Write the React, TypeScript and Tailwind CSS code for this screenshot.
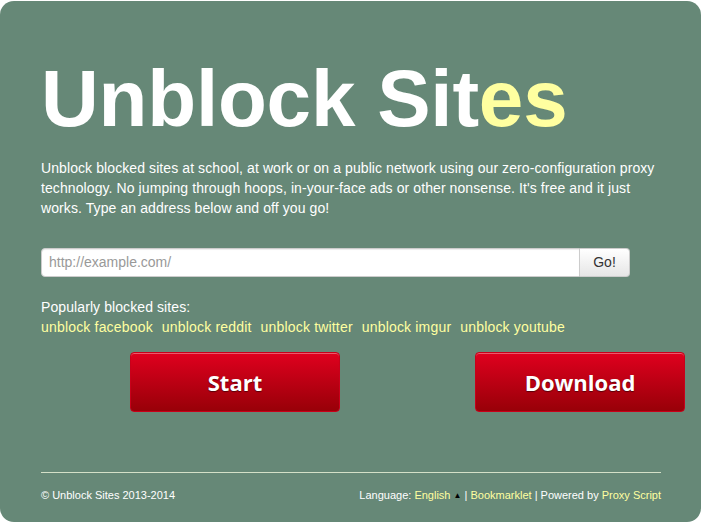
import React from "react";

export default function App() {
  const arial = { fontFamily: '"Liberation Sans", Arial, sans-serif' };
  const links = ["unblock facebook", "unblock reddit", "unblock twitter", "unblock imgur", "unblock youtube"];
  return (
    <div className="w-[703px] h-[525px] bg-white overflow-hidden" style={arial}>
      <div className="ml-0 mt-[1px] w-[701px] h-[521px] rounded-[14px] bg-[#668877] flex flex-col pl-[41px] text-white">
        <h1 className="mt-[58px] text-[80px] leading-[80px] font-bold tracking-[-0.2px] text-white">
          Unblock Sit<span className="text-[#ffffa0]">es</span>
        </h1>
        <p className="mt-[19px] w-[620px] text-[14px] leading-[20px] tracking-[0.09px] text-white">
          Unblock blocked sites at school, at work or on a public network using our zero-configuration proxy technology. No jumping through hoops, in-your-face ads or other nonsense. It's free and it just works. Type an address below and off you go!
        </p>
        <div className="mt-[30px] flex w-[589px] h-[29px]">
          <div className="flex-1 bg-white border border-[#cccccc] rounded-l-[4px] flex items-center px-[7px] text-[14px] text-[#999999] shadow-[inset_0_1px_1px_rgba(0,0,0,0.075)]">
            http://example.com/
          </div>
          <div className="w-[50px] border border-l-0 border-[#cccccc] rounded-r-[4px] bg-gradient-to-b from-white to-[#e6e6e6] flex items-center justify-center text-[14px] text-[#333333]">
            Go!
          </div>
        </div>
        <div className="mt-[20px] text-[14px] leading-[20px] tracking-[0.09px]">Popularly blocked sites:</div>
        <div className="flex gap-[9px] text-[14px] leading-[20px] tracking-[0.18px] text-[#ffffa0]">
          {links.map((l) => (
            <span key={l}>{l}</span>
          ))}
        </div>
        <div className="mt-[15px] flex gap-[135px] pl-[89px]">
          {["Start", "Download"].map((t) => (
            <div
              key={t}
              className="w-[210px] h-[60px] shrink-0 rounded-[4px] border border-[#c8001a] bg-gradient-to-b from-[#e0001e] to-[#980008] shadow-[inset_0_1px_0_rgba(255,255,255,0.35)] flex items-center justify-center text-[22px] font-bold text-white [text-shadow:0_1px_1px_rgba(0,0,0,0.5)]"
              style={{ fontFamily: '"Open Sans", sans-serif' }}
            >
              {t}
            </div>
          ))}
        </div>
        <div className="mt-[60px] w-[620px] h-px bg-[#d4e0c8]" />
        <div className="mt-[14px] w-[620px] flex justify-between text-[11px] leading-[16px]">
          <span>© Unblock Sites 2013-2014</span>
          <span>
            Language: <span className="text-[#ffffa0]">English</span>{" "}
            <span className="text-[8px] text-black align-[1px]">▲</span>
            <span> | </span>
            <span className="text-[#ffffa0]">Bookmarklet</span>
            <span> | Powered by </span>
            <span className="text-[#ffffa0]">Proxy Script</span>
          </span>
        </div>
      </div>
    </div>
  );
}
